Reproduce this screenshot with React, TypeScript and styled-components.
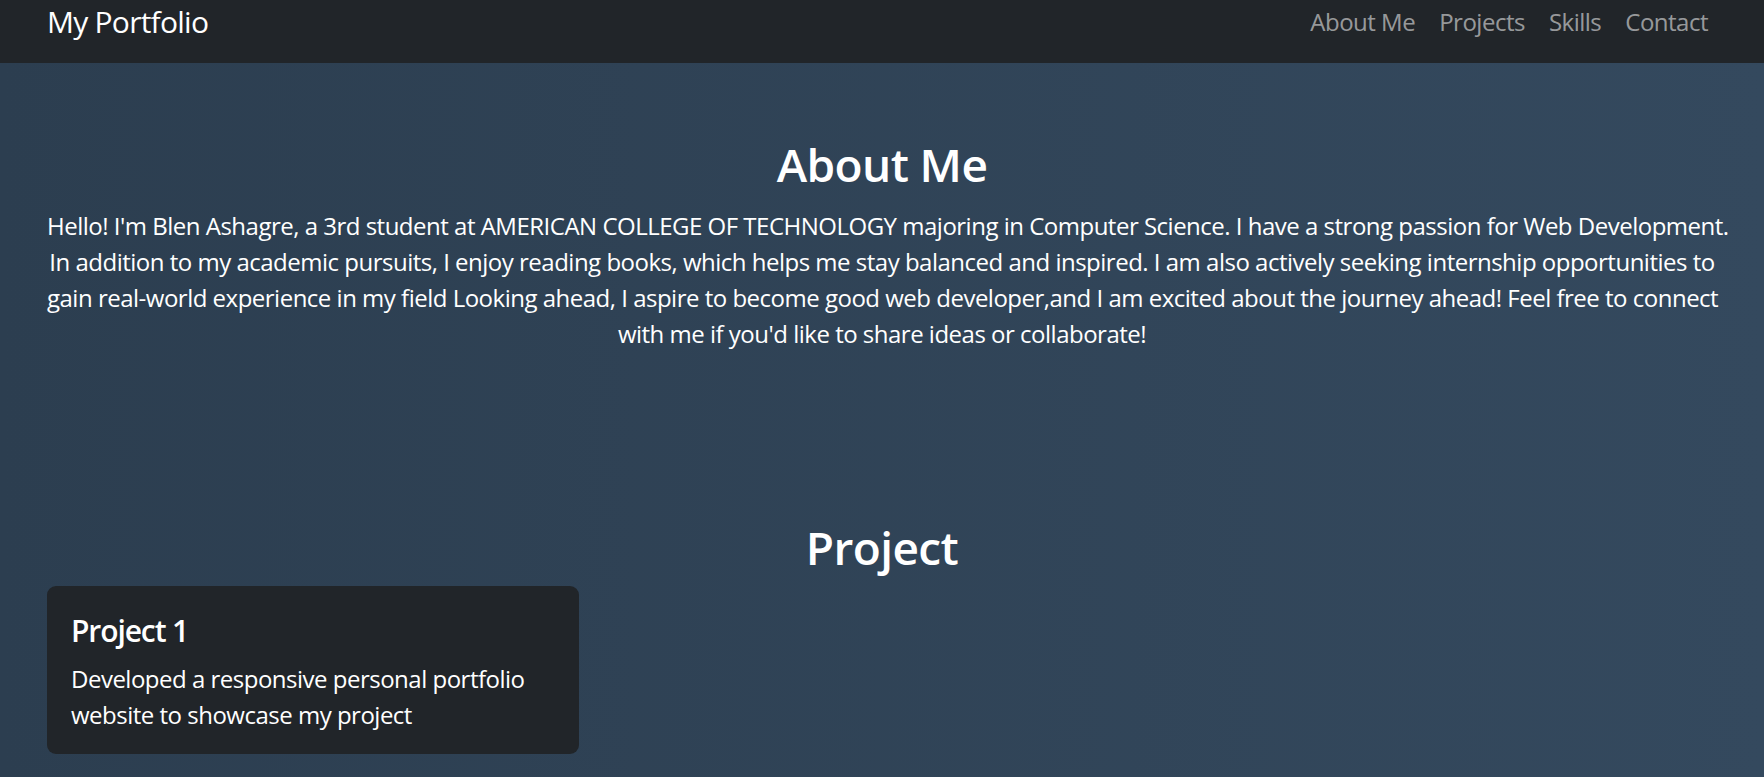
import React from "react";
import styled, { createGlobalStyle } from "styled-components";

const GlobalStyle = createGlobalStyle`
  html, body {
    margin: 0;
    padding: 0;
  }
  body {
    font-family: "Open Sans", "Noto Sans", sans-serif;
    color: #ffffff;
    background: linear-gradient(to right, #2c3e50, #34495e);
    min-height: 100vh;
  }
  #root {
    min-height: 100vh;
  }
`;

const Page = styled.div`
  min-height: 777px;
  display: flex;
  flex-direction: column;
`;

const Navbar = styled.nav`
  height: 63px;
  background: #212529;
  display: flex;
  align-items: flex-start;
  justify-content: space-between;
  padding: 0 44px 0 47px;
  box-sizing: border-box;
`;

const Brand = styled.a`
  font-size: 30px;
  line-height: 45px;
  letter-spacing: -0.75px;
  color: #ffffff;
  text-decoration: none;
  margin-top: -1px;
`;

const NavList = styled.ul`
  display: flex;
  list-style: none;
  margin: 4px 0 0;
  padding: 0;
`;

const NavLink = styled.a`
  display: block;
  padding: 0 12px;
  font-size: 24px;
  line-height: 36px;
  letter-spacing: -0.5px;
  color: rgba(255, 255, 255, 0.55);
  text-decoration: none;
`;

const Main = styled.main`
  padding: 0 47px;
`;

const Section = styled.section<{ $top: number }>`
  margin-top: ${(p) => p.$top}px;
`;

const Heading = styled.h2`
  margin: 0 0 16px;
  font-size: 46px;
  line-height: 55px;
  font-weight: 600;
  letter-spacing: -0.6px;
  text-align: center;
`;

const Paragraph = styled.p`
  margin: 0;
  font-size: 24px;
  line-height: 36px;
  letter-spacing: -0.5px;
  text-align: center;
  white-space: nowrap;
`;

const CardRow = styled.div`
  display: flex;
  margin-top: -5px;
`;

const Card = styled.div`
  width: 532px;
  box-sizing: border-box;
  background: #212529;
  border-radius: 9px;
  padding: 27px 24px 21px;
`;

const CardTitle = styled.h5`
  margin: 0 0 12px;
  font-size: 30px;
  line-height: 36px;
  font-weight: 600;
  letter-spacing: -1.1px;
`;

const CardText = styled.p`
  margin: 0;
  font-size: 24px;
  line-height: 36px;
  letter-spacing: -0.5px;
`;

const links = ["About Me", "Projects", "Skills", "Contact"];

export default function App() {
  return (
    <Page>
      <GlobalStyle />
      <Navbar>
        <Brand href="#">My Portfolio</Brand>
        <NavList>
          {links.map((l) => (
            <li key={l}>
              <NavLink href="#">{l}</NavLink>
            </li>
          ))}
        </NavList>
      </Navbar>
      <Main>
        <Section $top={74}>
          <Heading>About Me</Heading>
          <Paragraph>
            Hello! I'm Blen Ashagre, a 3rd student at AMERICAN COLLEGE OF TECHNOLOGY majoring in Computer Science. I have a strong passion for Web Development.
            <br />
            In addition to my academic pursuits, I enjoy reading books, which helps me stay balanced and inspired. I am also actively seeking internship opportunities to
            <br />
            gain real-world experience in my field Looking ahead, I aspire to become good web developer,and I am excited about the journey ahead! Feel free to connect
            <br />
            with me if you'd like to share ideas or collaborate!
          </Paragraph>
        </Section>
        <Section $top={168}>
          <Heading>Project</Heading>
          <CardRow>
            <Card>
              <CardTitle>Project 1</CardTitle>
              <CardText>Developed a responsive personal portfolio website to showcase my project</CardText>
            </Card>
          </CardRow>
        </Section>
      </Main>
    </Page>
  );
}
